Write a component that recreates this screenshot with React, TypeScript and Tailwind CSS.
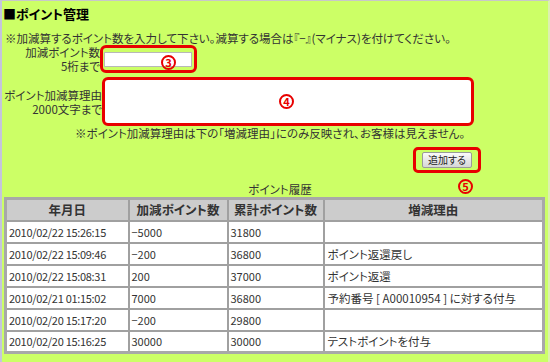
import React from "react";

type Row = { date: string; diff: string; total: string; reason: string };

const rows: Row[] = [
  { date: "2010/02/22 15:26:15", diff: "−5000", total: "31800", reason: "" },
  { date: "2010/02/22 15:09:46", diff: "−200", total: "36800", reason: "ポイント返還戻し" },
  { date: "2010/02/22 15:08:31", diff: "200", total: "37000", reason: "ポイント返還" },
  { date: "2010/02/21 01:15:02", diff: "7000", total: "36800", reason: "予約番号 [ A00010954 ] に対する付与" },
  { date: "2010/02/20 15:17:20", diff: "−200", total: "29800", reason: "" },
  { date: "2010/02/20 15:16:25", diff: "30000", total: "30000", reason: "テストポイントを付与" },
];

function Num({ n }: { n: string }) {
  return (
    <span className="flex items-center justify-center w-[15px] h-[15px] rounded-full border-2 border-[#e80000] text-[#e80000] text-[11px] font-bold leading-none">
      {n}
    </span>
  );
}

export default function App() {
  return (
    <div className="w-[550px] h-[362px] overflow-hidden bg-[#ccff66] border-t border-[#c8c8c8] border-l-2 border-l-[#c4c4dc] border-r-2 border-r-[#dcf0b0] text-[#333] font-['Noto_Sans_CJK_JP',sans-serif] [font-feature-settings:'palt']">
      <div className="pt-[4px] pl-[1px] text-[13px] font-bold leading-[18px] text-black">■ポイント管理</div>

      <div className="mt-[8px] pl-[3px] text-[11.5px] leading-[14px] whitespace-nowrap">
        ※加減算するポイント数を入力して下さい。減算する場合は『−』(マイナス)を付けてください。
      </div>

      {/* 加減ポイント数 */}
      <div className="flex items-start">
        <div className="w-[98px] flex flex-col items-end text-[11.5px] leading-[14px] whitespace-nowrap">
          <span>加減ポイント数</span>
          <span>5桁まで</span>
        </div>
        <div className="relative w-[97px] h-[28px] border-[3px] border-[#e80000] rounded-[6px] px-[1px] pt-[4px]">
          <div className="w-[88px] h-[15px] bg-white border border-[#b8b8b8]" />
          <div className="absolute left-[58px] top-[7px]">
            <Num n="3" />
          </div>
        </div>
      </div>

      {/* 理由 */}
      <div className="flex items-start mt-[4px]">
        <div className="w-[100px] pt-[11px] flex flex-col items-end text-[11.5px] leading-[14px] whitespace-nowrap">
          <span>ポイント加減算理由</span>
          <span>2000文字まで</span>
        </div>
        <div className="relative w-[372px] h-[49px] bg-white border-[3px] border-[#e80000] rounded-[6px]">
          <div className="absolute left-[174px] top-[14px]">
            <Num n="4" />
          </div>
        </div>
      </div>

      <div className="ml-[73px] text-[11.5px] leading-[14px] whitespace-nowrap">
        ※ポイント加減算理由は下の「増減理由」にのみ反映され、お客様は見えません。
      </div>

      {/* ボタン */}
      <div className="ml-[411px] mt-[7px] relative w-[68px] h-[26px] border-[3px] border-[#e80000] rounded-[5px] flex items-center justify-center">
        <button className="w-[50px] h-[16px] rounded-[2px] border border-[#9a9a9a] bg-gradient-to-b from-[#fafafa] to-[#d6d6d6] text-[10px] leading-none text-[#222]">
          追加する
        </button>
        <div className="absolute left-[42px] top-[29px]">
          <Num n="5" />
        </div>
      </div>

      <div className="mt-[9px] pl-[10px] text-center text-[11.5px] leading-[14px]">ポイント履歴</div>

      <div className="pl-[2px] pr-[2px] mt-[1px]">
        <table className="w-[541px] border-collapse border-[3px] border-[#a8a8a8] text-[11.5px] table-fixed">
          <thead>
            <tr className="h-[22px] bg-[#cccccc]">
              <th className="w-[123px] border-2 border-[#a0a0a0] font-bold text-[12.5px] leading-[14px] text-[#333]">年月日</th>
              <th className="w-[99px] border-2 border-[#a0a0a0] font-bold text-[12.5px] leading-[14px] text-[#333]">加減ポイント数</th>
              <th className="w-[96px] border-2 border-[#a0a0a0] font-bold text-[12.5px] leading-[14px] text-[#333]">累計ポイント数</th>
              <th className="border-2 border-[#a0a0a0] font-bold text-[12.5px] leading-[14px] text-[#333]">増減理由</th>
            </tr>
          </thead>
          <tbody>
            {rows.map((r) => (
              <tr key={r.date} className="h-[22px] bg-white">
                <td className="border-2 border-[#a0a0a0] pl-[2px] leading-[14px] text-[11px] tracking-[-0.3px]">{r.date}</td>
                <td className="border-2 border-[#a0a0a0] pl-[2px] leading-[14px] text-[11px]">{r.diff}</td>
                <td className="border-2 border-[#a0a0a0] pl-[2px] leading-[14px] text-[11px]">{r.total}</td>
                <td className="border-2 border-[#a0a0a0] pl-[3px] leading-[14px]">{r.reason}</td>
              </tr>
            ))}
          </tbody>
        </table>
      </div>
    </div>
  );
}
